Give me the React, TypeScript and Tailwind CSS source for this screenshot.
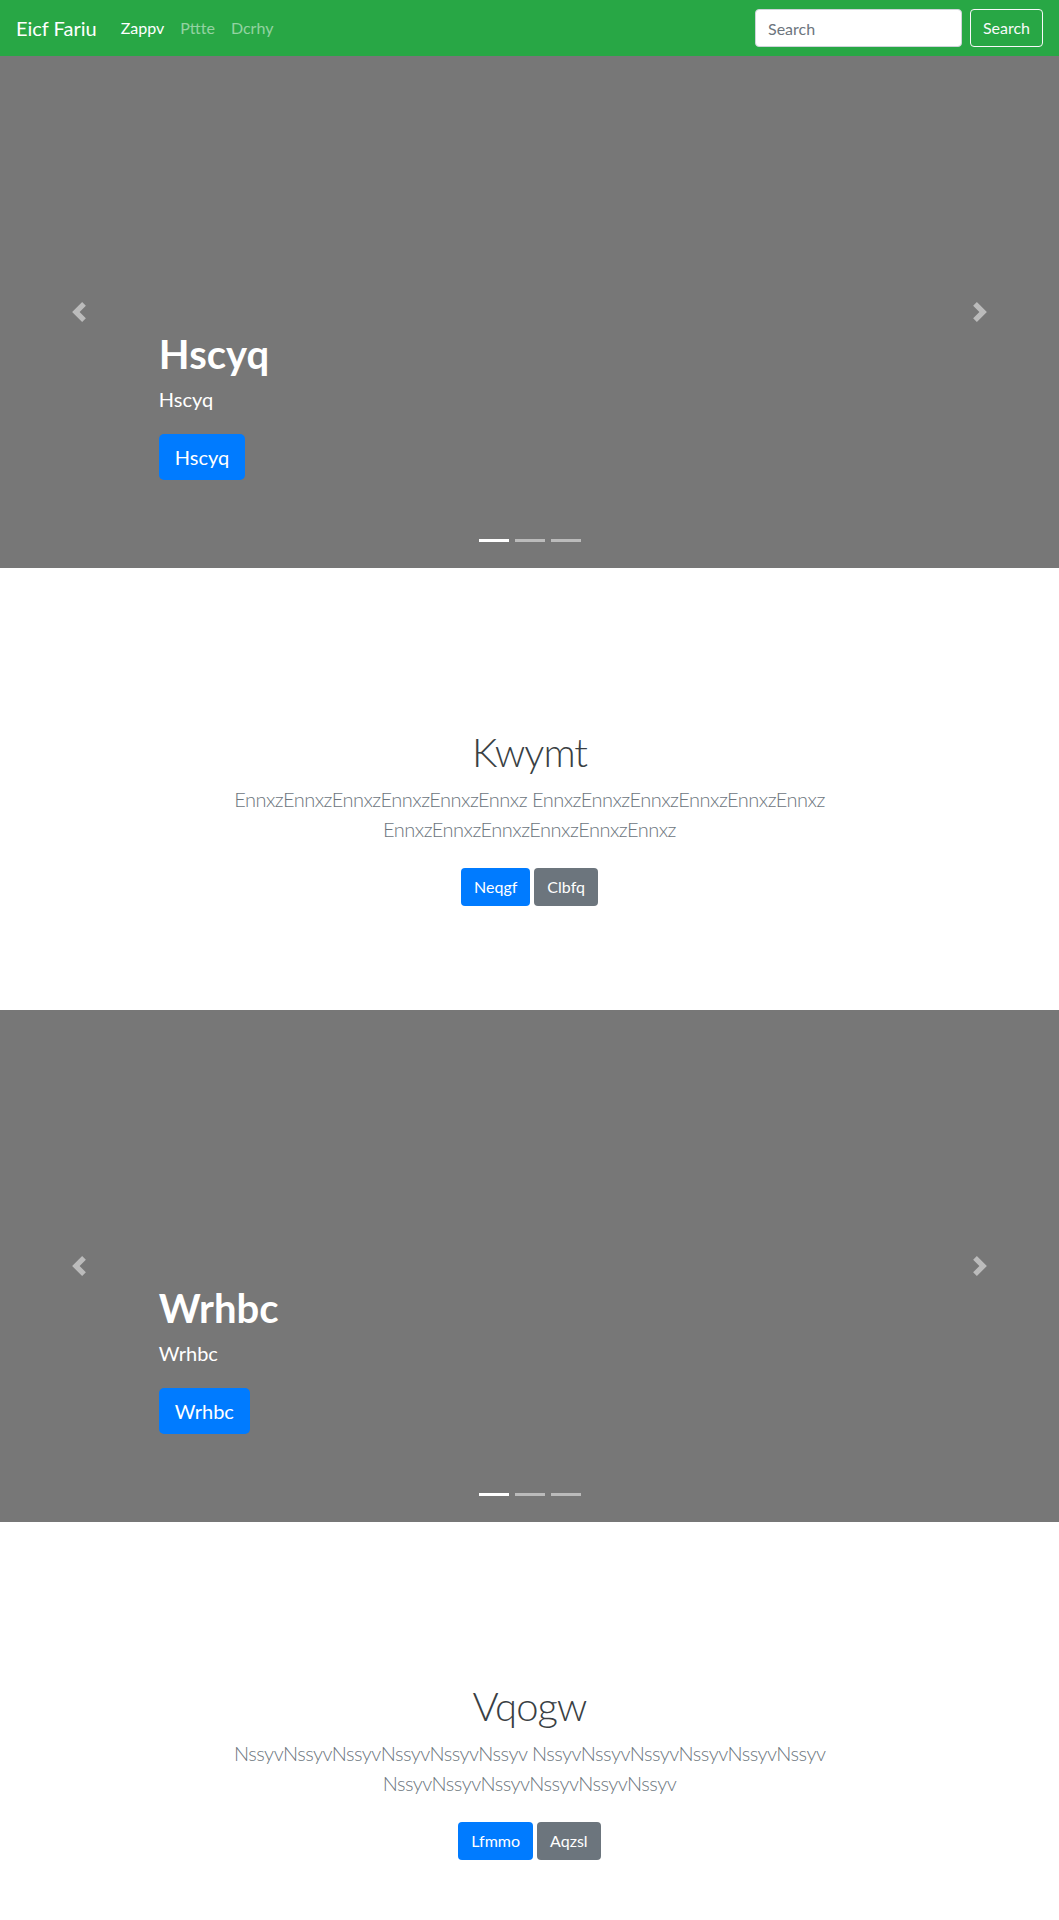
import React from "react";

function Chevron({ dir }: { dir: "prev" | "next" }) {
  return (
    <svg width="20" height="20" viewBox="0 0 8 8" fill="#fff">
      {dir === "prev" ? (
        <path d="M5.25 0l-4 4 4 4 1.5-1.5L4.25 4l2.5-2.5L5.25 0z" />
      ) : (
        <path d="M2.75 0l-1.5 1.5L3.75 4l-2.5 2.5L2.75 8l4-4-4-4z" />
      )}
    </svg>
  );
}

function Carousel({ title }: { title: string }) {
  return (
    <div className="relative flex h-[512px] flex-col justify-end bg-[#777] pb-[88px] pl-[15%] pr-[15%] text-white">
      <button className="absolute inset-y-0 left-0 flex w-[15%] items-center justify-center opacity-50">
        <Chevron dir="prev" />
      </button>
      <button className="absolute inset-y-0 right-0 flex w-[15%] items-center justify-center opacity-50">
        <Chevron dir="next" />
      </button>

      <h1 className="mb-[6px] text-[40px] leading-[48px] font-bold">{title}</h1>
      <p className="mb-5 text-[20px] leading-[30px]">{title}</p>
      <div>
        <a className="inline-block rounded-[5px] bg-[#007bff] px-4 py-2 text-[20px] leading-[30px] text-white">
          {title}
        </a>
      </div>

      <ol className="absolute inset-x-0 bottom-[26px] flex justify-center">
        <li className="mx-[3px] h-[3px] w-[30px] bg-white" />
        <li className="mx-[3px] h-[3px] w-[30px] bg-white/50" />
        <li className="mx-[3px] h-[3px] w-[30px] bg-white/50" />
      </ol>
    </div>
  );
}

type IntroProps = {
  title: string;
  word: string;
  primary: string;
  secondary: string;
};

function Intro(props: IntroProps) {
  const chunk = props.word.repeat(6);
  return (
    <section className="pt-[160px] pb-[96px] text-center">
      <h1 className="mb-2 text-[40px] leading-[48px] font-light tracking-[-1px] text-[#3a3f44]">{props.title}</h1>
      <p className="mx-auto mb-4 max-w-[660px] text-[20px] leading-[30px] font-light tracking-[-0.5px] text-[#6c757d]">
        {chunk} {chunk} {chunk}
      </p>
      <div className="flex justify-center gap-1">
        <a className="my-2 inline-block rounded bg-[#007bff] px-[13px] py-[7px] text-base leading-6 text-white">
          {props.primary}
        </a>
        <a className="my-2 inline-block rounded bg-[#6c757d] px-[13px] py-[7px] text-base leading-6 text-white">
          {props.secondary}
        </a>
      </div>
    </section>
  );
}

export default function App() {
  return (
    <div className="min-h-screen bg-white font-['Lato','Open_Sans',sans-serif]">
      <nav className="flex h-14 items-center bg-[#28a745] px-4">
        <a className="mr-4 text-[20px] leading-[30px] text-white">Eicf Fariu</a>
        <ul className="flex text-base leading-6">
          <li><a className="block px-2 py-2 text-white">Zappv</a></li>
          <li><a className="block px-2 py-2 text-white/50">Pttte</a></li>
          <li><a className="block px-2 py-2 text-white/50">Dcrhy</a></li>
        </ul>
        <form className="ml-auto flex items-center">
          <input
            placeholder="Search"
            className="mr-2 h-[38px] w-[207px] rounded border border-[#ced4da] bg-white px-3 text-base text-[#495057] outline-none placeholder:text-[#6c757d]"
          />
          <button
            type="button"
            className="h-[38px] w-[73px] rounded border border-[#f8f9fa] text-base text-[#f8f9fa]"
          >
            Search
          </button>
        </form>
      </nav>

      <Carousel title="Hscyq" />
      <Intro title="Kwymt" word="Ennxz" primary="Neqgf" secondary="Clbfq" />
      <Carousel title="Wrhbc" />
      <Intro title="Vqogw" word="Nssyv" primary="Lfmmo" secondary="Aqzsl" />
    </div>
  );
}
